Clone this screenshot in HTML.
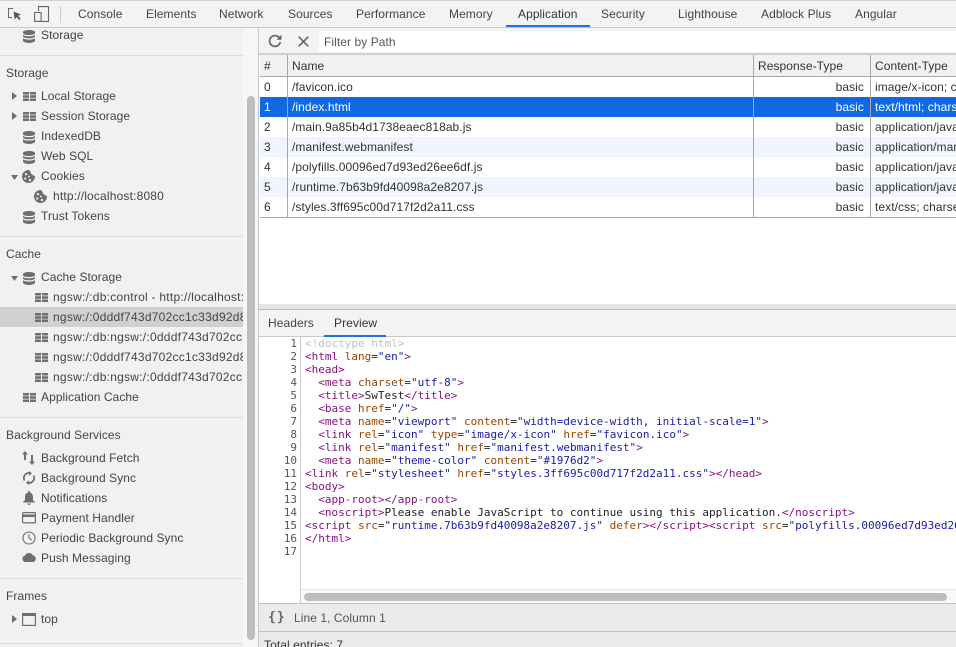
<!DOCTYPE html>
<html lang="en"><head><meta charset="utf-8"><title>DevTools Application</title>
<style>
html,body{margin:0;padding:0;width:956px;height:647px;overflow:hidden;background:#fff}
body{position:relative;font:12px/16px "Liberation Sans",sans-serif;color:#3a3a3a;letter-spacing:.07px}
div,span.a,svg{position:absolute}
svg{overflow:visible}
.t{white-space:nowrap}
#top{left:0;top:0;width:956px;height:27px;background:#f3f3f3;border-top:1px solid #d0d0d0;box-sizing:border-box}
#topb{left:0;top:27px;width:956px;height:1px;background:#c8c8c8}
#top .t{top:5px;color:#444}
#side{left:0;top:28px;width:243px;height:619px;background:#f1f1f1;overflow:hidden}
#side .t{color:#444;transform:translateY(1px)}
#side svg{transform:translateY(1px)}
.h{left:6px}
.l1{left:41px}
.l2{left:53px;letter-spacing:.25px}
.dv{left:0;width:243px;height:1px;background:#dcdcdc}
.ic{fill:#6e6e6e;stroke:none}
.tb{left:260px;width:696px;height:20px;line-height:20px}
.tb div{top:0;white-space:nowrap;line-height:20px;color:#333}
.c0{left:4px}.c1{left:32px}.c2{left:493px;width:111px;text-align:right}.c3{left:615px}
.sel{background:#1069e2}.sel div{color:#fff!important}
.alt{background:#f0f5fd}
.vl{width:1px;background:#a8a8a8}
#code{left:259px;top:337px;width:697px;height:252px;overflow:hidden;font:11px/13px "DejaVu Sans Mono",monospace;color:#222;letter-spacing:0}
#nums{left:0;top:0;width:38px;text-align:right;color:#555;white-space:pre}
#src{left:46px;top:0;white-space:pre;width:700px}
.g{color:#c0c0c0}.p{color:#881280}.n{color:#994500}.v{color:#1a1aa6}
</style></head><body>
<svg width="0" height="0" style="position:absolute"><defs>
<symbol id="db" viewBox="0 0 12 14" preserveAspectRatio="none"><path d="M6 0C2.7 0 0 .9 0 2.2v1.1C0 4.5 2.7 5.4 6 5.4s6-.9 6-2.1V2.2C12 .9 9.3 0 6 0zM0 4.8v1.9C0 8 2.7 8.9 6 8.9s6-.9 6-2.2V4.8C12 6 9.3 6.7 6 6.7S0 6 0 4.8zM0 8.3v3.2C0 12.9 2.7 14 6 14s6-1.100 6-2.500V8.300C12 9.500 9.300 10.300 6 10.300S0 9.500 0 8.300z"/></symbol>
<symbol id="gr" viewBox="0 0 13 10" preserveAspectRatio="none"><path d="M0 0h6v2.800H0zM7 0h6v2.800H7zM0 3.600h6v2.800H0zM7 3.600h6v2.800H7zM0 7.200h6V10H0zM7 7.200h6V10H7z"/></symbol>
<symbol id="ck" viewBox="0 0 14 14"><path fill-rule="evenodd" d="M7 0a7 7 0 1 0 7 7c0-.7-.6-1-1.200-1-.9 0-1.500-.5-1.600-1.400-.9 0-1.700-.7-1.700-1.700C8.700 1.500 8.200 0 7 0zM4.300 3.200a1.300 1.300 0 1 1 0 2.600 1.300 1.300 0 0 1 0-2.600zM3.500 8a1.200 1.200 0 1 1 0 2.400 1.200 1.200 0 0 1 0-2.400zM7.500 6a1 1 0 1 1 0 2 1 1 0 0 1 0-2zM8.500 9.500a1.300 1.300 0 1 1 0 2.600 1.300 1.300 0 0 1 0-2.600z"/></symbol>
</defs></svg>

<div id="top">
<svg style="left:8px;top:7px" width="14" height="14" viewBox="0 0 14 14" fill="none"><path d="M5 .5H.5v9H4" stroke="#666" stroke-width="1"/><path d="M5.500 3.500l7.500 3-3 1.200 2.700 3-1.500 1.300-2.500-3-2 2.500z" fill="#555"/></svg>
<svg style="left:34px;top:5px" width="15" height="16" viewBox="0 0 15 16" fill="none" stroke="#666" stroke-width="1.100"><path d="M4.500 5V.6h10V15.400h-10"/><path d="M.6 6.500h6.500v8.900H.6z"/></svg>
<div style="left:60px;top:5px;width:1px;height:17px;background:#ccc"></div>
<div class="t" style="left:78px">Console</div>
<div class="t" style="left:146px">Elements</div>
<div class="t" style="left:219px">Network</div>
<div class="t" style="left:288px">Sources</div>
<div class="t" style="left:356px">Performance</div>
<div class="t" style="left:449px">Memory</div>
<div class="t" style="left:518px;color:#333">Application</div>
<div class="t" style="left:601px">Security</div>
<div class="t" style="left:678px">Lighthouse</div>
<div class="t" style="left:761px">Adblock Plus</div>
<div class="t" style="left:855px">Angular</div>
</div>
<div id="topb"></div>
<div style="left:506px;top:25px;width:84px;height:2px;background:#1a73e8"></div>

<div id="side">
<svg class="ic" style="left:23px;top:1px" width="12" height="13"><use href="#db" width="12" height="13"/></svg>
<div class="t l1" style="top:-2px">Storage</div>
<div class="dv" style="top:27px"></div>
<div class="t h" style="top:36px">Storage</div>
<svg class="ic" style="left:12px;top:63px" width="5" height="8"><path d="M0 0l5 4-5 4z"/></svg>
<svg class="ic" style="left:23px;top:63px" width="13" height="9"><use href="#gr" width="13" height="9"/></svg>
<div class="t l1" style="top:59px">Local Storage</div>
<svg class="ic" style="left:12px;top:83px" width="5" height="8"><path d="M0 0l5 4-5 4z"/></svg>
<svg class="ic" style="left:23px;top:83px" width="13" height="9"><use href="#gr" width="13" height="9"/></svg>
<div class="t l1" style="top:79px">Session Storage</div>
<svg class="ic" style="left:23px;top:102px" width="12" height="13"><use href="#db" width="12" height="13"/></svg>
<div class="t l1" style="top:99px">IndexedDB</div>
<svg class="ic" style="left:23px;top:122px" width="12" height="13"><use href="#db" width="12" height="13"/></svg>
<div class="t l1" style="top:119px">Web SQL</div>
<svg class="ic" style="left:11px;top:146px" width="7" height="5"><path d="M0 0h7L3.500 5z"/></svg>
<svg class="ic" style="left:22px;top:141px" width="13" height="13"><use href="#ck" width="13" height="13"/></svg>
<div class="t l1" style="top:139px">Cookies</div>
<svg class="ic" style="left:34px;top:161px" width="13" height="13"><use href="#ck" width="13" height="13"/></svg>
<div class="t l2" style="top:159px;letter-spacing:.17px">http://localhost:8080</div>
<svg class="ic" style="left:23px;top:182px" width="12" height="13"><use href="#db" width="12" height="13"/></svg>
<div class="t l1" style="top:179px">Trust Tokens</div>
<div class="dv" style="top:208px"></div>
<div class="t h" style="top:217px">Cache</div>
<svg class="ic" style="left:11px;top:247px" width="7" height="5"><path d="M0 0h7L3.500 5z"/></svg>
<svg class="ic" style="left:23px;top:243px" width="12" height="13"><use href="#db" width="12" height="13"/></svg>
<div class="t l1" style="top:240px">Cache Storage</div>
<div style="left:0;top:279px;width:243px;height:20px;background:#d0d0d0"></div>
<svg class="ic" style="left:35px;top:264px" width="13" height="9"><use href="#gr" width="13" height="9"/></svg>
<div class="t l2" style="top:260px">ngsw:/:db:control - http://localhost:8080/</div>
<svg class="ic" style="left:35px;top:284px" width="13" height="9"><use href="#gr" width="13" height="9"/></svg>
<div class="t l2" style="top:280px">ngsw:/:0dddf743d702cc1c33d92d8a9b3f1c0e</div>
<svg class="ic" style="left:35px;top:304px" width="13" height="9"><use href="#gr" width="13" height="9"/></svg>
<div class="t l2" style="top:300px">ngsw:/:db:ngsw:/:0dddf743d702cc1c33d92d8</div>
<svg class="ic" style="left:35px;top:324px" width="13" height="9"><use href="#gr" width="13" height="9"/></svg>
<div class="t l2" style="top:320px">ngsw:/:0dddf743d702cc1c33d92d8a9b3f1c0e</div>
<svg class="ic" style="left:35px;top:344px" width="13" height="9"><use href="#gr" width="13" height="9"/></svg>
<div class="t l2" style="top:340px">ngsw:/:db:ngsw:/:0dddf743d702cc1c33d92d8</div>
<svg class="ic" style="left:23px;top:364px" width="13" height="9"><use href="#gr" width="13" height="9"/></svg>
<div class="t l1" style="top:360px">Application Cache</div>
<div class="dv" style="top:389px"></div>
<div class="t h" style="top:398px">Background Services</div>
<svg style="left:22px;top:422px" width="14" height="14" fill="#6e6e6e"><path d="M3 0l3 3.500H4V9H2V3.500H0zM9 4h2v6.500h2L10 14l-3-3.500h2z"/></svg>
<div class="t l1" style="top:421px">Background Fetch</div>
<svg style="left:23px;top:442px" width="12" height="14" fill="none" stroke="#6e6e6e" stroke-width="1.700"><path d="M1.500 9.500A5 5 0 0 1 7 2.200M10.500 4.500A5 5 0 0 1 5 11.800"/><path d="M6 0l3 2.300L6 4.800zM6 9.200L3 11.700 6 14z" fill="#6e6e6e" stroke="none"/></svg>
<div class="t l1" style="top:441px">Background Sync</div>
<svg style="left:23px;top:462px" width="12" height="14" fill="#6e6e6e"><path d="M6 0c.6 0 1 .4 1 1v.6c2 .5 3 2.200 3 4.400v3l2 2v.5H0V11l2-2V6c0-2.200 1-3.900 3-4.400V1c0-.6.400-1 1-1zM4.500 12.500h3C7.500 13.400 6.800 14 6 14s-1.500-.6-1.500-1.500z"/></svg>
<div class="t l1" style="top:461px">Notifications</div>
<svg style="left:22px;top:483px" width="14" height="12" fill="none"><rect x=".6" y=".6" width="12.800" height="10.300" rx="1" stroke="#6e6e6e" stroke-width="1.200"/><rect x="1" y="2.500" width="12" height="2.500" fill="#6e6e6e"/></svg>
<div class="t l1" style="top:481px">Payment Handler</div>
<svg style="left:22px;top:502px" width="14" height="14" fill="none" stroke="#6e6e6e" stroke-width="1.100"><circle cx="7" cy="7" r="6"/><path d="M7 3.200V7l2.800 2.200"/></svg>
<div class="t l1" style="top:501px">Periodic Background Sync</div>
<svg style="left:22px;top:523px" width="14" height="10" fill="#6e6e6e"><path d="M3.500 10A3.300 3.300 0 0 1 3 3.500 4.500 4.500 0 0 1 11 3.500 3.300 3.300 0 0 1 11 10z"/></svg>
<div class="t l1" style="top:521px">Push Messaging</div>
<div class="dv" style="top:550px"></div>
<div class="t h" style="top:559px">Frames</div>
<svg class="ic" style="left:12px;top:586px" width="5" height="8"><path d="M0 0l5 4-5 4z"/></svg>
<svg style="left:22px;top:584px" width="14" height="13" fill="none"><rect x=".6" y=".6" width="12.800" height="11.800" stroke="#6e6e6e" stroke-width="1.200"/><rect x="1" y="1" width="12" height="2" fill="#6e6e6e"/></svg>
<div class="t l1" style="top:582px">top</div>
<div class="dv" style="top:615px"></div>
</div>

<div style="left:243px;top:28px;width:15px;height:619px;background:#f6f6f6"></div>
<div style="left:247px;top:96px;width:8px;height:544px;background:#bdbdbd;border-radius:4px"></div>
<div style="left:258px;top:28px;width:1px;height:619px;background:#c8c8c8"></div>

<div style="left:259px;top:28px;width:697px;height:26px;background:#f3f3f3"></div>
<svg style="left:268px;top:34px" width="14" height="14" fill="none" stroke="#666" stroke-width="1.700"><path d="M11.500 4A5.400 5.400 0 1 0 12.300 8"/><path d="M13.500 .8v5H8.500z" fill="#666" stroke="none"/></svg>
<svg style="left:298px;top:36px" width="11" height="11" fill="none" stroke="#666" stroke-width="1.600"><path d="M.7.700l9.600 9.600M10.300.700L.7 10.300"/></svg>
<div style="left:319px;top:31px;width:637px;height:21px;background:#fff"></div>
<div class="t" style="left:324px;top:34px;color:#555">Filter by Path</div>
<div style="left:259px;top:53px;width:697px;height:2px;background:#d0d0d0"></div>

<div style="left:260px;top:55px;width:696px;height:21px;background:#f1f1f1"></div>
<div class="t" style="left:264px;top:58px;color:#333">#</div>
<div class="t" style="left:292px;top:58px;color:#333">Name</div>
<div class="t" style="left:758px;top:58px;color:#333">Response-Type</div>
<div class="t" style="left:875px;top:58px;color:#333">Content-Type</div>
<div style="left:260px;top:76px;width:696px;height:1px;background:#a8a8a8"></div>

<div class="tb" style="top:77px"><div class="c0">0</div><div class="c1">/favicon.ico</div><div class="c2">basic</div><div class="c3">image/x-icon; charset</div></div>
<div class="tb sel" style="top:97px"><div class="c0">1</div><div class="c1">/index.html</div><div class="c2">basic</div><div class="c3">text/html; charset</div></div>
<div class="tb" style="top:117px"><div class="c0">2</div><div class="c1">/main.9a85b4d1738eaec818ab.js</div><div class="c2">basic</div><div class="c3">application/javascript</div></div>
<div class="tb alt" style="top:137px"><div class="c0">3</div><div class="c1">/manifest.webmanifest</div><div class="c2">basic</div><div class="c3">application/manifest</div></div>
<div class="tb" style="top:157px"><div class="c0">4</div><div class="c1">/polyfills.00096ed7d93ed26ee6df.js</div><div class="c2">basic</div><div class="c3">application/javascript</div></div>
<div class="tb alt" style="top:177px"><div class="c0">5</div><div class="c1">/runtime.7b63b9fd40098a2e8207.js</div><div class="c2">basic</div><div class="c3">application/javascript</div></div>
<div class="tb" style="top:197px"><div class="c0">6</div><div class="c1">/styles.3ff695c00d717f2d2a11.css</div><div class="c2">basic</div><div class="c3">text/css; charset</div></div>
<div style="left:260px;top:217px;width:696px;height:1px;background:#a8a8a8"></div>
<div class="vl" style="left:287px;top:55px;height:162px"></div>
<div class="vl" style="left:753px;top:55px;height:162px"></div>
<div class="vl" style="left:870px;top:55px;height:162px"></div>

<div style="left:259px;top:304px;width:697px;height:5px;background:#e4e4e4"></div>
<div style="left:259px;top:309px;width:697px;height:27px;background:#f3f3f3;border-top:1px solid #bbb;box-sizing:border-box"></div>
<div class="t" style="left:268px;top:315px;color:#444">Headers</div>
<div class="t" style="left:334px;top:315px;color:#333">Preview</div>
<div style="left:259px;top:336px;width:697px;height:1px;background:#c8c8c8"></div>
<div style="left:324px;top:335px;width:62px;height:2px;background:#1a73e8"></div>

<div id="code">
<div id="nums">1
2
3
4
5
6
7
8
9
10
11
12
13
14
15
16
17</div>
<div id="src"><span class="g">&lt;!doctype html&gt;</span>
<span class="p">&lt;html</span> <span class="n">lang</span>=<span class="v">"en"</span><span class="p">&gt;</span>
<span class="p">&lt;head&gt;</span>
  <span class="p">&lt;meta</span> <span class="n">charset</span>=<span class="v">"utf-8"</span><span class="p">&gt;</span>
  <span class="p">&lt;title&gt;</span>SwTest<span class="p">&lt;/title&gt;</span>
  <span class="p">&lt;base</span> <span class="n">href</span>=<span class="v">"/"</span><span class="p">&gt;</span>
  <span class="p">&lt;meta</span> <span class="n">name</span>=<span class="v">"viewport"</span> <span class="n">content</span>=<span class="v">"width=device-width, initial-scale=1"</span><span class="p">&gt;</span>
  <span class="p">&lt;link</span> <span class="n">rel</span>=<span class="v">"icon"</span> <span class="n">type</span>=<span class="v">"image/x-icon"</span> <span class="n">href</span>=<span class="v">"favicon.ico"</span><span class="p">&gt;</span>
  <span class="p">&lt;link</span> <span class="n">rel</span>=<span class="v">"manifest"</span> <span class="n">href</span>=<span class="v">"manifest.webmanifest"</span><span class="p">&gt;</span>
  <span class="p">&lt;meta</span> <span class="n">name</span>=<span class="v">"theme-color"</span> <span class="n">content</span>=<span class="v">"#1976d2"</span><span class="p">&gt;</span>
<span class="p">&lt;link</span> <span class="n">rel</span>=<span class="v">"stylesheet"</span> <span class="n">href</span>=<span class="v">"styles.3ff695c00d717f2d2a11.css"</span><span class="p">&gt;&lt;/head&gt;</span>
<span class="p">&lt;body&gt;</span>
  <span class="p">&lt;app-root&gt;&lt;/app-root&gt;</span>
  <span class="p">&lt;noscript&gt;</span>Please enable JavaScript to continue using this application.<span class="p">&lt;/noscript&gt;</span>
<span class="p">&lt;script</span> <span class="n">src</span>=<span class="v">"runtime.7b63b9fd40098a2e8207.js"</span> <span class="n">defer</span><span class="p">&gt;&lt;/script&gt;&lt;script</span> <span class="n">src</span>=<span class="v">"polyfills.00096ed7d93ed26ee6df.js"</span>
<span class="p">&lt;/html&gt;</span>
</div>
</div>
<div style="left:300px;top:337px;width:1px;height:267px;background:#c8c8c8"></div>
<div style="left:301px;top:589px;width:655px;height:15px;background:#f8f8f8;border-top:1px solid #e6e6e6;box-sizing:border-box"></div>
<div style="left:304px;top:593px;width:643px;height:8px;background:#bdbdbd;border-radius:4px"></div>

<div style="left:259px;top:604px;width:697px;height:43px;background:#ebebeb"></div>
<div style="left:259px;top:603px;width:697px;height:1px;background:#c0c0c0"></div>
<div style="left:259px;top:631px;width:697px;height:1px;background:#c4c4c4"></div>
<div class="t" style="left:268px;top:610px;color:#666;font:bold 13px/16px 'DejaVu Sans Mono',monospace;letter-spacing:1px">{}</div>
<div class="t" style="left:294px;top:610px;color:#555">Line 1, Column 1</div>
<div class="t" style="left:264px;top:637px;color:#333">Total entries: 7</div>
</body></html>
